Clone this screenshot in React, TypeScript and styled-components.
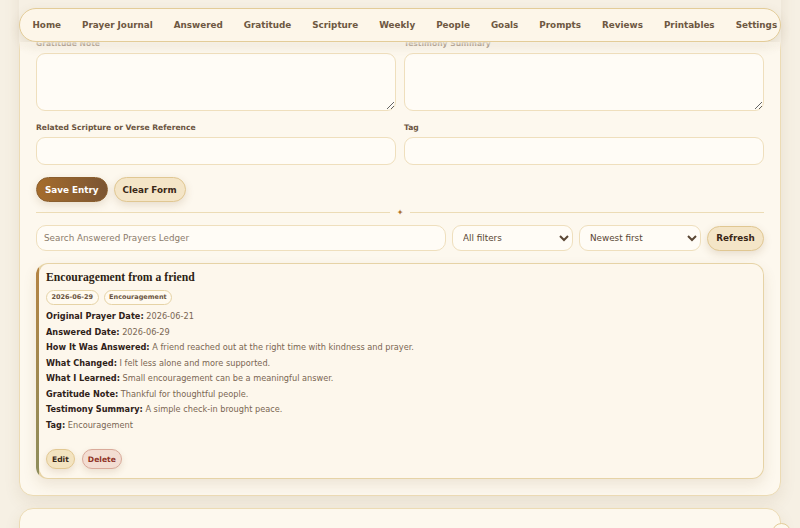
import React, { useLayoutEffect, useRef } from 'react';
import styled, { createGlobalStyle } from 'styled-components';

const GlobalStyle = createGlobalStyle`
  html, body {
    margin: 0;
    padding: 0;
    height: 100%;
    background: #f6f0e4;
  }
  body {
    font-family: "DejaVu Sans", Verdana, sans-serif;
    color: #3a2a1c;
    overflow: hidden;
  }
  * { box-sizing: border-box; }
`;

// the page scrolls inside this box, so the shot can sit part way down
const Shell = styled.div`
  height: 100vh;
  overflow-y: auto;
  scrollbar-width: none;

  &::-webkit-scrollbar {
    display: none;
  }
`;

const Page = styled.div`
  padding: 0 19px 40px;
  display: flex;
  flex-direction: column;
  gap: 12px;
`;

const Header = styled.header`
  position: sticky;
  top: 0;
  z-index: 10;
  padding-top: 8px;
  background: #f6f0e4;

  &::after {
    content: '';
    position: absolute;
    left: 0;
    right: 0;
    top: 100%;
    height: 9px;
    background: linear-gradient(180deg, rgba(246, 240, 228, 0.85), rgba(246, 240, 228, 0));
  }
`;

const Nav = styled.nav`
  height: 34px;
  display: flex;
  align-items: center;
  padding: 0 2px;
  border: 1px solid #e3cc98;
  border-radius: 17px;
  background: #fdf6e9;
  box-shadow: 0 4px 12px rgba(110, 80, 40, 0.12);
  overflow: hidden;
  white-space: nowrap;
`;

const NavItem = styled.a`
  flex: none;
  padding: 6px 10.5px;
  font-size: 8.8px;
  font-weight: 700;
  color: #6e5842;
  text-decoration: none;
`;

const Panel = styled.section<{ $tall?: boolean }>`
  position: relative;
  min-height: ${p => (p.$tall ? '420px' : '0')};
  background: #fdf8ee;
  border: 1px solid #ecdbb4;
  border-radius: 14px;
  padding: ${p => (p.$tall ? '30px 16px 16px' : '16px')};
  box-shadow: 0 6px 16px rgba(120, 90, 40, 0.1);
`;

const PanelTitle = styled.h2`
  margin: 0 0 6px;
  font-family: "Liberation Serif", serif;
  font-size: 16px;
  color: #3a2718;
`;

const PanelNote = styled.p`
  margin: 0 0 14px;
  font-size: 8px;
  color: #7a6652;
`;

const FormGrid = styled.div`
  display: grid;
  grid-template-columns: 1fr 1fr;
  column-gap: 8px;
  row-gap: 12px;
`;

const Field = styled.label`
  display: flex;
  flex-direction: column;
  gap: 4px;
  min-width: 0;
`;

const FieldLabel = styled.span`
  font-size: 7.6px;
  font-weight: 700;
  line-height: 10px;
  color: #6b5440;
`;

const TextInput = styled.input`
  height: 28px;
  border: 1px solid #efdfbd;
  border-radius: 9px;
  background: #fffcf6;
  padding: 0 8px;
  font: inherit;
  font-size: 8.8px;
  outline: none;
`;

const TextArea = styled.textarea`
  height: 58px;
  border: 1px solid #efdfbd;
  border-radius: 9px;
  background: #fffcf6;
  padding: 6px 8px;
  font: inherit;
  font-size: 8.8px;
  resize: vertical;
  outline: none;
`;

const Actions = styled.div`
  display: flex;
  gap: 6px;
  margin-top: 12px;
`;

const Button = styled.button<{ $variant?: 'primary' | 'soft' }>`
  height: 25px;
  padding: 0 8px;
  border-radius: 13px;
  font-family: inherit;
  font-size: 8.8px;
  font-weight: 700;
  cursor: pointer;
  border: 1px solid ${p => (p.$variant === 'primary' ? '#8a5e2e' : '#e0c792')};
  color: ${p => (p.$variant === 'primary' ? '#ffffff' : '#3a2716')};
  background: ${p =>
    p.$variant === 'primary' ? 'linear-gradient(90deg, #a56c2c, #7b5533)' : '#f4e5c7'};
  box-shadow: 0 3px 8px rgba(120, 80, 30, 0.16);
`;

const Divider = styled.div`
  height: 1px;
  display: flex;
  align-items: center;
  gap: 7px;
  margin: 10px 0 12px;
`;

const DividerLine = styled.span`
  flex: 1;
  height: 1px;
  background: #ecdcb6;
`;

const DividerMark = styled.span`
  font-size: 8px;
  line-height: 8px;
  color: #ad7430;
`;

const Filters = styled.div`
  display: grid;
  grid-template-columns: minmax(0, 1fr) 121px 122px 57px;
  gap: 6px;
  align-items: center;
`;

const SearchInput = styled.input`
  height: 26px;
  border: 1px solid #efdfbd;
  border-radius: 10px;
  background: #fffcf6;
  padding: 0 7px;
  font: inherit;
  font-size: 8.8px;
  color: #3a2a1c;
  outline: none;

  &::placeholder {
    color: #8b7b6b;
  }
`;

const Select = styled.select`
  height: 26px;
  border: 1px solid #efdfbd;
  border-radius: 9px;
  background: #fffcf6;
  padding: 0 6px;
  font: inherit;
  font-size: 8.8px;
  color: #5a4634;
  outline: none;
`;

const Card = styled.article`
  margin-top: 12px;
  border: 1px solid transparent;
  border-left-width: 3px;
  border-radius: 12px;
  padding: 6px 10px 9px 7px;
  background:
    linear-gradient(#fdf7ec, #fdf7ec) padding-box,
    linear-gradient(180deg, #b58342, #8d8d5c) left / 3px 100% no-repeat border-box,
    linear-gradient(#e6d3a6, #e6d3a6) border-box;
  box-shadow: 0 6px 14px rgba(120, 90, 40, 0.12);
`;

const CardTitle = styled.h3`
  margin: 0 0 4px;
  font-family: "Liberation Serif", "Times New Roman", serif;
  font-size: 11.7px;
  line-height: 16px;
  font-weight: 700;
  color: #2e1f14;
`;

const Chips = styled.div`
  display: flex;
  gap: 5px;
`;

const Chip = styled.span`
  height: 15px;
  padding: 0 4.5px;
  border: 1px solid #e6d3a6;
  border-radius: 8px;
  background: #fffaf0;
  font-size: 6.5px;
  font-weight: 700;
  line-height: 13px;
  color: #6b5440;
`;

const Details = styled.div`
  margin-top: 4px;
`;

const Row = styled.p`
  margin: 0;
  font-size: 8.2px;
  line-height: 15.5px;
  color: #7a6652;

  b {
    color: #2f2118;
  }
`;

const CardActions = styled.div`
  display: flex;
  gap: 7px;
  margin-top: 16px;
`;

const SmallButton = styled.button<{ $danger?: boolean }>`
  height: 20px;
  padding: 0 5px;
  border-radius: 10px;
  font-family: inherit;
  font-size: 7.6px;
  font-weight: 700;
  cursor: pointer;
  border: 1px solid ${p => (p.$danger ? '#d9aa9a' : '#e2c892')};
  background: ${p => (p.$danger ? '#f3ddd2' : '#f3e3c0')};
  color: ${p => (p.$danger ? '#8f3326' : '#3b2a1a')};
  box-shadow: 0 3px 7px rgba(120, 80, 30, 0.14);
`;

const CornerToggle = styled.button`
  position: absolute;
  top: 14px;
  right: -11px;
  width: 19px;
  height: 19px;
  border-radius: 50%;
  border: 1px solid #e3cc98;
  background: #fdf8ee;
  padding: 0;
`;

const navItems = [
  'Home', 'Prayer Journal', 'Answered', 'Gratitude', 'Scripture', 'Weekly',
  'People', 'Goals', 'Prompts', 'Reviews', 'Printables', 'Settings',
];

const entry = {
  title: 'Encouragement from a friend',
  rows: [
    ['Original Prayer Date', '2026-06-21'],
    ['Answered Date', '2026-06-29'],
    ['How It Was Answered', 'A friend reached out at the right time with kindness and prayer.'],
    ['What Changed', 'I felt less alone and more supported.'],
    ['What I Learned', 'Small encouragement can be a meaningful answer.'],
    ['Gratitude Note', 'Thankful for thoughtful people.'],
    ['Testimony Summary', 'A simple check-in brought peace.'],
    ['Tag', 'Encouragement'],
  ],
};

export default function App() {
  const shell = useRef<HTMLDivElement>(null);
  const anchor = useRef<HTMLTextAreaElement>(null);

  // scrolled down so the Gratitude Note box sits just under the nav
  useLayoutEffect(() => {
    const box = shell.current;
    const el = anchor.current;
    if (!box || !el) return;
    const offset = el.getBoundingClientRect().top - box.getBoundingClientRect().top;
    box.scrollTop = box.scrollTop + offset - 53;
  }, []);

  return (
    <>
      <GlobalStyle />
      <Shell ref={shell}>
        <Page>
          <Header>
            <Nav>
              {navItems.map(item => (
                <NavItem key={item} href="#">{item}</NavItem>
              ))}
            </Nav>
          </Header>

          <Panel>
            <PanelTitle>Answered Prayers Ledger</PanelTitle>
            <PanelNote>Record how prayers were answered and what you learned along the way.</PanelNote>
            <FormGrid>
              <Field>
                <FieldLabel>Prayer Title</FieldLabel>
                <TextInput />
              </Field>
              <Field>
                <FieldLabel>Category</FieldLabel>
                <TextInput />
              </Field>
              <Field>
                <FieldLabel>Original Prayer Date</FieldLabel>
                <TextInput />
              </Field>
              <Field>
                <FieldLabel>Answered Date</FieldLabel>
                <TextInput />
              </Field>
              <Field>
                <FieldLabel>How It Was Answered</FieldLabel>
                <TextArea />
              </Field>
              <Field>
                <FieldLabel>What Changed</FieldLabel>
                <TextArea />
              </Field>
              <Field>
                <FieldLabel>Gratitude Note</FieldLabel>
                <TextArea ref={anchor} />
              </Field>
              <Field>
                <FieldLabel>Testimony Summary</FieldLabel>
                <TextArea />
              </Field>
              <Field>
                <FieldLabel>Related Scripture or Verse Reference</FieldLabel>
                <TextInput />
              </Field>
              <Field>
                <FieldLabel>Tag</FieldLabel>
                <TextInput />
              </Field>
            </FormGrid>

            <Actions>
              <Button $variant="primary">Save Entry</Button>
              <Button>Clear Form</Button>
            </Actions>

            <Divider>
              <DividerLine />
              <DividerMark>✦</DividerMark>
              <DividerLine />
            </Divider>

            <Filters>
              <SearchInput placeholder="Search Answered Prayers Ledger" />
              <Select defaultValue="all">
                <option value="all">All filters</option>
              </Select>
              <Select defaultValue="newest">
                <option value="newest">Newest first</option>
              </Select>
              <Button>Refresh</Button>
            </Filters>

            <Card>
              <CardTitle>{entry.title}</CardTitle>
              <Chips>
                <Chip>2026-06-29</Chip>
                <Chip>Encouragement</Chip>
              </Chips>
              <Details>
                {entry.rows.map(([k, v]) => (
                  <Row key={k}>
                    <b>{k}:</b> {v}
                  </Row>
                ))}
              </Details>
              <CardActions>
                <SmallButton>Edit</SmallButton>
                <SmallButton $danger>Delete</SmallButton>
              </CardActions>
            </Card>
          </Panel>

          <Panel $tall>
            <CornerToggle aria-label="Toggle section" />
            <PanelTitle>Gratitude List</PanelTitle>
            <PanelNote>Small thanks add up.</PanelNote>
          </Panel>
        </Page>
      </Shell>
    </>
  );
}
